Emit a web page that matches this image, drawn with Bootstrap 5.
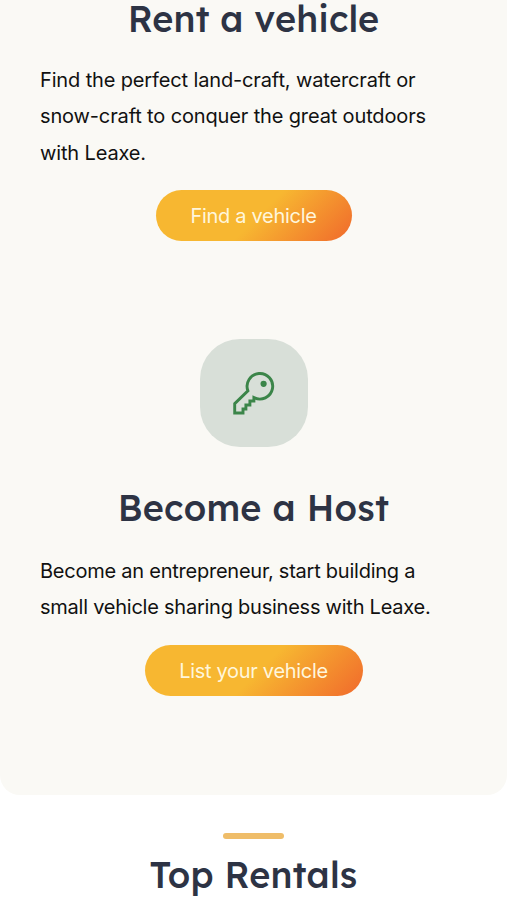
<!DOCTYPE html>
<html lang="en">
<head>
<meta charset="utf-8">
<meta name="viewport" content="width=device-width, initial-scale=1">
<title>Leaxe</title>
<link href="https://cdn.jsdelivr.net/npm/bootstrap@5.3.0/dist/css/bootstrap.min.css" rel="stylesheet">
<style>
body{font-family:Inter,"Liberation Sans",sans-serif;color:#111;overflow:hidden;height:900px}
.services{background:#faf9f5;height:794.5px;border-radius:0 0 20px 20px;padding:0 40px}
.title{font-family:Lexend,Inter,sans-serif;font-feature-settings:"cv11";font-weight:540;font-size:36px;line-height:46px;color:#2d3344;white-space:nowrap}
.title-rent{line-height:38px;letter-spacing:.15px}
.title-host{margin-top:38px;letter-spacing:.25px}
.copy{font-size:20px;line-height:36.7px}
.copy-rent{letter-spacing:-.14px;margin-top:23.5px}
.copy-host{letter-spacing:-.24px;margin-top:21.5px}
.btn-sun{font-size:20px;line-height:51px;height:51px;padding:1px 0 0;border:0;color:#fff6dc;letter-spacing:-.3px;background:linear-gradient(135deg,#f7b731 0%,#f7b731 52%,#f0642b 103%)}
.btn-sun:hover{color:#fff}
.btn-find{width:196px;margin-top:18.5px}
.btn-list{width:218px;margin-top:19px}
.icon-tile{width:108px;height:108px;border-radius:40px;background:#d8dfd8;margin-top:98px}
.accent{width:61px;height:6px;border-radius:3px;background:#efbd69;margin-top:38px}
.title-top{margin-top:13.5px;letter-spacing:.2px}
</style>
</head>
<body>
<section class="services d-flex flex-column align-items-center">
  <h2 class="title title-rent mb-0">Rent a vehicle</h2>
  <p class="copy copy-rent align-self-start mb-0">Find the perfect land-craft, watercraft or<br>snow-craft to conquer the great outdoors<br>with Leaxe.</p>
  <a href="#" class="btn btn-sun btn-find rounded-pill">Find a vehicle</a>
  <div class="icon-tile d-flex align-items-center justify-content-center flex-shrink-0">
    <svg width="44" height="44" viewBox="0 0 44 44" fill="none" aria-hidden="true">
      <path d="M15.9 19.8A12.8 12.8 0 1 1 21.9 26.6V30H17.9V34H13.9V38H11V42H2.7V32.7L15.9 19.8Z" stroke="#3b8549" stroke-width="2.9"/>
      <circle cx="31.6" cy="12.8" r="3.1" fill="#3b8549"/>
    </svg>
  </div>
  <h2 class="title title-host mb-0">Become a Host</h2>
  <p class="copy copy-host align-self-start mb-0">Become an entrepreneur, start building a<br>small vehicle sharing business with Leaxe.</p>
  <a href="#" class="btn btn-sun btn-list rounded-pill">List your vehicle</a>
</section>
<section class="d-flex flex-column align-items-center">
  <div class="accent"></div>
  <h2 class="title title-top mb-0">Top Rentals</h2>
</section>
<script src="https://cdn.jsdelivr.net/npm/bootstrap@5.3.0/dist/js/bootstrap.bundle.min.js"></script>
</body>
</html>
